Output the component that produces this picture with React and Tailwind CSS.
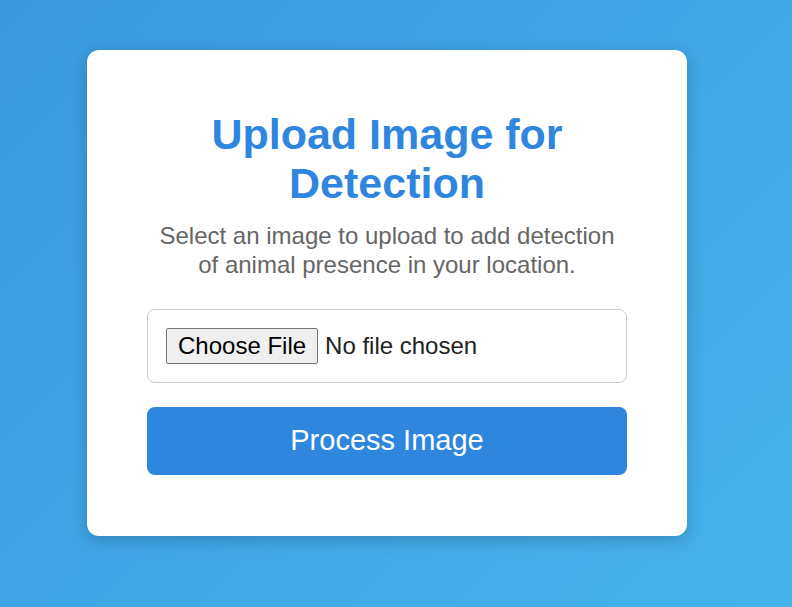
export default function App() {
  return (
    <div className="flex min-h-screen items-start bg-[linear-gradient(135deg,#3899e0,#45b3e9)] pt-[50px] font-['Liberation_Sans',Arial,sans-serif]">
      <div className="ml-[87px] w-[600px] rounded-xl bg-white px-[60px] pb-[61px] pt-[60px] text-center shadow-[0_4px_16px_rgba(0,0,0,0.2)]">
        <h1 className="text-[43px] font-bold leading-[49px] text-[#2e86de]">
          Upload Image for Detection
        </h1>
        <p className="mt-[14px] text-[24px] leading-[28.8px] text-[#666]">
          Select an image to upload to add detection of animal presence in your location.
        </p>
        <div className="mt-[29px] rounded-lg border border-[#ccc] p-[18px] text-left">
          <input
            type="file"
            className="block h-9 text-[24px] leading-[36px] text-[#222] file:mr-[7px] file:h-9 file:rounded-[2px] file:border file:border-[#767676] file:bg-[#efefef] file:px-[11px] file:py-0 file:leading-[34px] file:text-black"
          />
        </div>
        <button className="mt-6 h-[68px] w-full rounded-lg bg-[#2e86de] text-[29px] text-white">
          Process Image
        </button>
      </div>
    </div>
  );
}
